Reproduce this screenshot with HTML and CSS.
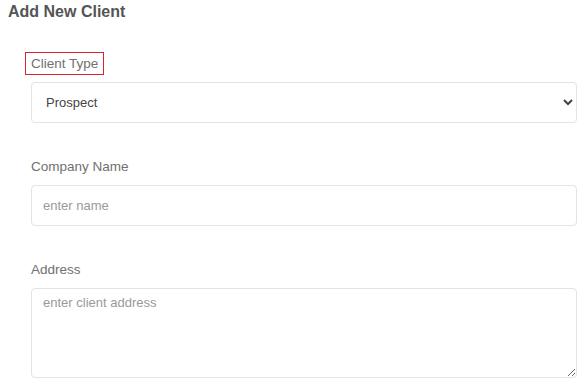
FILE: index.html
```html
<!DOCTYPE html>
<html lang="en">
<head>
    <meta charset="UTF-8">
    <meta name="viewport" content="width=device-width, initial-scale=1.0">
    <title>Add New Client</title>
    <link rel="stylesheet" href="styles.css">
</head>
<body>
    <h2>Add New Client</h2>
    <form class="client-form">
        <div class="field">
            <label for="clientType" class="highlight">Client Type</label>
            <select id="clientType">
                <option>Prospect</option>
                <option>Active</option>
                <option>Former</option>
            </select>
        </div>
        <div class="field">
            <label for="companyName">Company Name</label>
            <input type="text" id="companyName" placeholder="enter name">
        </div>
        <div class="field">
            <label for="clientAddress">Address</label>
            <textarea id="clientAddress" placeholder="enter client address"></textarea>
        </div>
    </form>
</body>
</html>
```
FILE: styles.css
```css
body {
    font-family: "Liberation Sans", Arial, sans-serif;
    margin: 0;
    padding: 3px 10px 0 8px;
    background-color: #fff;
}
h2 {
    margin: 0;
    font-size: 16px;
    line-height: 18px;
    color: #555;
}
.client-form {
    margin-top: 31px;
    padding-left: 23px;
}
.field {
    margin-bottom: 32px;
}
.field:last-child {
    margin-bottom: 0;
}
.field label {
    display: inline-block;
    margin-left: -6px;
    margin-bottom: 7px;
    padding: 3px 5px;
    border: 1px solid transparent;
    font-size: 13.5px;
    line-height: 15px;
    color: #707070;
}
.field label.highlight {
    border-color: #d9232e;
}
select, input[type="text"], textarea {
    display: block;
    box-sizing: border-box;
    width: 100%;
    border: 1px solid #e3e3e3;
    border-radius: 4px;
    background-color: #fff;
    font-family: inherit;
    font-size: 13px;
    color: #444;
}
select {
    height: 41px;
    padding: 0 6px 0 10px;
}
input[type="text"] {
    height: 41px;
    padding: 0 11px;
}
textarea {
    height: 90px;
    padding: 6px 11px;
}
::placeholder {
    color: #999;
}
```
